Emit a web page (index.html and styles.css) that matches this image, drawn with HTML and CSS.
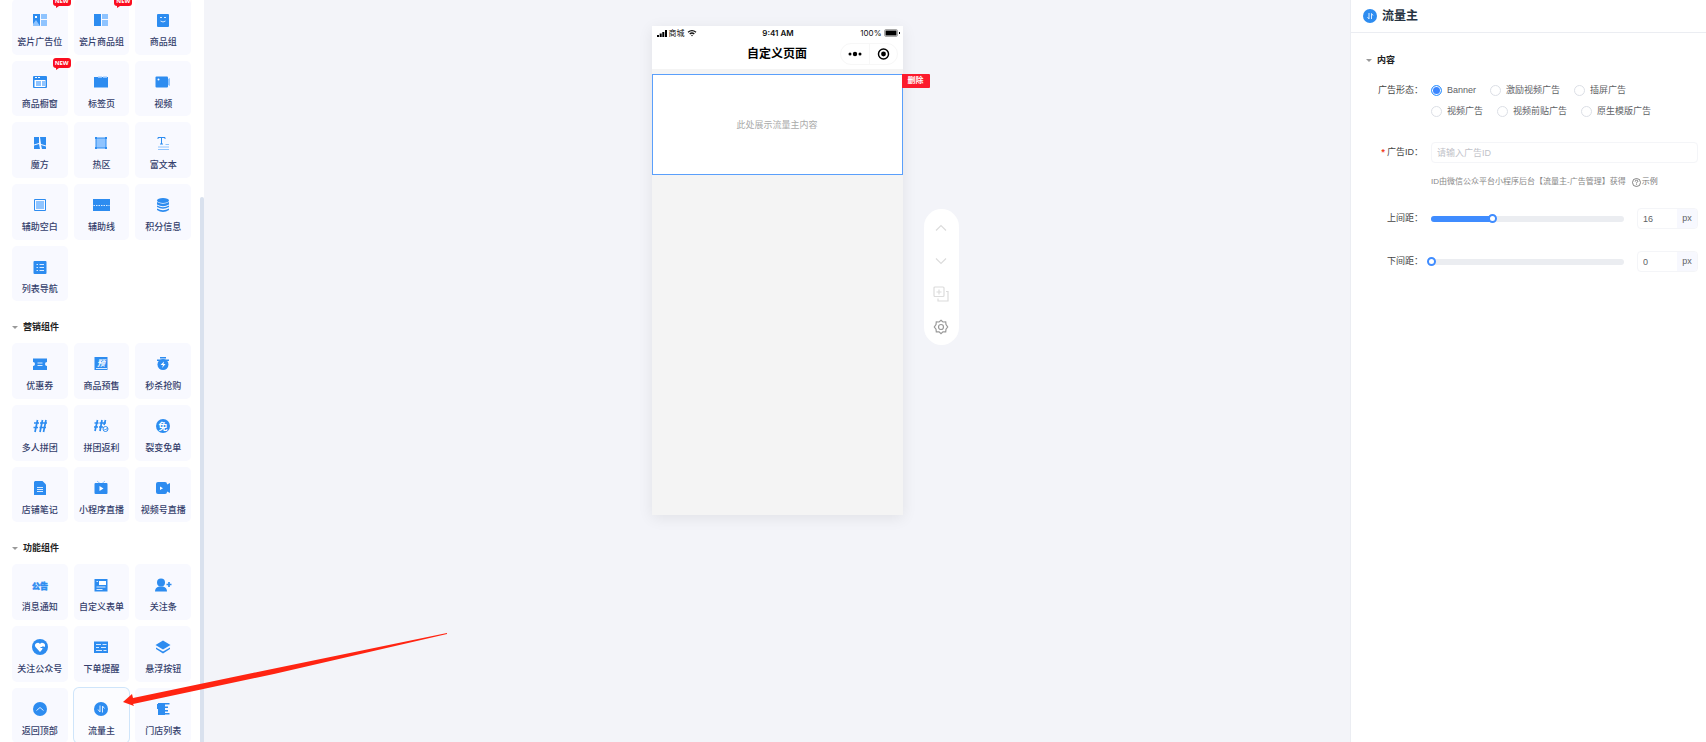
FILE: index.html
```html
<!DOCTYPE html>
<html lang="zh-CN">
	<head>
		<meta charset="utf-8" />
		<title>自定义页面</title>
		<link rel="stylesheet" href="styles.css">
	</head>
	<body>
		<div class="mainbox">
			<!-- 左侧组件列表 -->
			<aside class="sidebar">
				<div class="tiles first">
					<button class="tile"><span class="new">NEW</span>
						<svg viewBox="0 0 18 18"><path d="M2 3h7v12H2z"/><path class="l" d="M10 3h6v5h-6zM10 9h6v6h-6zM2 15v-2l3-4 4 6z"/><path class="w" d="M4 5h2v2H4z"/></svg>
						<span>瓷片广告位</span></button>
					<button class="tile"><span class="new">NEW</span>
						<svg viewBox="0 0 18 18"><path d="M2 3h7v12H2z"/><path class="l" d="M10 3h6v5h-6zM10 9h6v6h-6z"/></svg>
						<span>瓷片商品组</span></button>
					<button class="tile">
						<svg viewBox="0 0 18 18"><rect x="3" y="3" width="12" height="13" rx="1"/><path class="ws" d="M6 6.500h2M10 6.500h2M6.500 10q2.500 2 5 0"/></svg>
						<span>商品组</span></button>
					<button class="tile"><span class="new">NEW</span>
						<svg viewBox="0 0 18 18"><rect x="2" y="3" width="14" height="12" rx="1"/><path class="w" d="M3.500 7h11v7h-11zM4 4h2v1H4zM7 4h2v1H7z"/><path class="l" d="M5 8h5v5H5zM11 8h3v5h-3z"/></svg>
						<span>商品橱窗</span></button>
					<button class="tile">
						<svg viewBox="0 0 18 18"><path d="M2 4h14v10.500H2z"/><path class="l" d="M6 3.500h4V5H6zM11 3.500h4V5h-4z"/></svg>
						<span>标签页</span></button>
					<button class="tile">
						<svg viewBox="0 0 18 18"><rect x="1.500" y="3.500" width="12.500" height="11" rx="1"/><path class="l" d="M14 6l2-1v8l-2-1z"/><circle class="w" cx="4.500" cy="6.500" r="1"/></svg>
						<span>视频</span></button>
					<button class="tile">
						<svg viewBox="0 0 18 18"><path d="M3 3h5v6l-5 1.500zM3 11.500L8 10l1 5H3zM9 3h6v8.500L10 10zM10 11l5 1.500V15h-4z"/></svg>
						<span>魔方</span></button>
					<button class="tile">
						<svg viewBox="0 0 18 18"><rect class="l" x="4" y="4" width="10" height="10"/><rect class="s" x="4" y="4" width="10" height="10"/><path d="M3 3h2v2H3zM13 3h2v2h-2zM3 13h2v2H3zM13 13h2v2h-2z"/></svg>
						<span>热区</span></button>
					<button class="tile">
						<svg viewBox="0 0 18 18"><path class="s" d="M4 5V3.500h7V5M7.500 3.500V10M6 10h3"/><path class="ls" d="M11.500 10.500H15M4 13h11M4 15.500h11"/></svg>
						<span>富文本</span></button>
					<button class="tile">
						<svg viewBox="0 0 18 18"><path class="s" d="M3.500 3.500h11v11h-11z"/><path class="l" d="M5 5h8v8H5z"/></svg>
						<span>辅助空白</span></button>
					<button class="tile">
						<svg viewBox="0 0 18 18"><path d="M1 3h17v12H1z"/><path class="ws" stroke-dasharray="1.500 1" d="M1.500 9.500h16"/></svg>
						<span>辅助线</span></button>
					<button class="tile">
						<svg viewBox="0 0 18 18"><ellipse cx="9" cy="4.500" rx="6" ry="2.500"/><path d="M3 6q6 3.500 12 0v2.500q-6 3.500-12 0zM3 9.500q6 3.500 12 0V11q-6 3.500-12 0zM3 12.500q6 3.500 12 0V14q-6 4-12 0z"/></svg>
						<span>积分信息</span></button>
					<button class="tile">
						<svg viewBox="0 0 18 18"><rect x="2.500" y="3" width="13" height="13" rx="1"/><path class="ws" d="M5.500 6.500H7M8.500 6.500H13M5.500 9.500H7M8.500 9.500H13M5.500 12.500H7M8.500 12.500H13"/></svg>
						<span>列表导航</span></button>
				</div>

				<h3 class="group"><i class="caret"></i>营销组件</h3>
				<div class="tiles">
					<button class="tile">
						<svg viewBox="0 0 18 18"><path d="M2 3.500h14v3.500a2 2 0 0 0 0 4v4H2v-4a2 2 0 0 0 0-4z"/><path class="ws" d="M6.500 8h5M6.500 10.500h5"/></svg>
						<span>优惠券</span></button>
					<button class="tile">
						<svg viewBox="0 0 18 18"><path d="M2.500 2h13v13h-13z"/><path class="ws" d="M4 13.500h11"/><text class="w it" x="5" y="10.500" font-size="8">预</text></svg>
						<span>商品预售</span></button>
					<button class="tile">
						<svg viewBox="0 0 18 18"><path d="M6 2h6v1.500H6zM3 4.500h12V6H3z"/><circle cx="9" cy="9.500" r="5.500"/><path class="w" d="M10 6.500L6.500 10H9l-1 3 3.500-4H9.500z"/></svg>
						<span>秒杀抢购</span></button>
					<button class="tile">
						<svg viewBox="0 0 18 18"><path class="s2" d="M3 6h5M2.500 10.500h4.500M6.500 3L4 15M9 6h7M8.500 10.500H15M11.500 3L9 15M15 3l-2.500 12"/></svg>
						<span>多人拼团</span></button>
					<button class="tile">
						<svg viewBox="0 0 18 18"><path class="s2" d="M2.500 6h4M2 10h4M5.500 3L3 14M7.500 6H14M7 10h4M10 3L8 14M13.500 3L12 8"/><circle class="s" cx="13.500" cy="12" r="2.500"/><path class="s" d="M12.500 12l1 1 2-2"/></svg>
						<span>拼团返利</span></button>
					<button class="tile">
						<svg viewBox="0 0 18 18"><circle cx="9" cy="9" r="7"/><text class="w" x="4.500" y="12.500" font-size="9">免</text></svg>
						<span>裂变免单</span></button>
					<button class="tile">
						<svg viewBox="0 0 18 18"><path d="M4 2h7.500L15 5.500V16H3V3z"/><path class="ws" d="M6 8.500h6M6 10.500h6M6 12.500h6"/></svg>
						<span>店铺笔记</span></button>
					<button class="tile">
						<svg viewBox="0 0 18 18"><path class="ls" d="M5 2l3 2.500M13 2l-3 2.500"/><rect x="2.500" y="4" width="13" height="11" rx="1"/><path class="w" d="M7.500 7v5l4-2.500z"/></svg>
						<span>小程序直播</span></button>
					<button class="tile">
						<svg viewBox="0 0 18 18"><rect x="2" y="3" width="11" height="12" rx="2"/><path d="M12 6l4-2v10l-4-2z"/><path class="w" d="M6 7.500v3.500l3-1.750z"/></svg>
						<span>视频号直播</span></button>
				</div>

				<h3 class="group"><i class="caret"></i>功能组件</h3>
				<div class="tiles">
					<button class="tile">
						<svg viewBox="0 0 18 18"><text class="hv" x="1" y="12.500" font-size="8">公告</text></svg>
						<span>消息通知</span></button>
					<button class="tile">
						<svg viewBox="0 0 18 18"><path d="M2.500 3h13v12.500h-13z"/><path class="ws" d="M4.500 5.500H6M4.500 11h9M4.500 13.500h6"/><path class="w" d="M7 5h7v4H7z"/></svg>
						<span>自定义表单</span></button>
					<button class="tile">
						<svg viewBox="0 0 18 18"><circle cx="7" cy="6.500" r="4"/><path d="M1 15.500q0-4 4-5h4q4 1 4 5z"/><path class="s2" d="M12.500 8.500h5M15 6v5"/></svg>
						<span>关注条</span></button>
					<button class="tile">
						<svg viewBox="0 0 18 18"><circle cx="9" cy="9" r="8"/><path class="w" d="M9 14L4.500 9a2.500 2.500 0 0 1 4.500-3 2.500 2.500 0 0 1 4.500 3z"/><path class="s" d="M9.500 9.500h5M12 8v5"/></svg>
						<span>关注公众号</span></button>
					<button class="tile">
						<svg viewBox="0 0 18 18"><path d="M2 3.500h14V15H2z"/><path class="ws" d="M4 6.500h5M10.500 6.500h4M4 9.500h3M9 9.500h5M4 12.500h6M11.500 12.500h3"/></svg>
						<span>下单提醒</span></button>
					<button class="tile">
						<svg viewBox="0 0 18 18"><path d="M9 2.500l7.500 4.500L9 11.500 1.500 7zM2 9.500l7 4 7-4V11l-7 4.500L2 11z"/></svg>
						<span>悬浮按钮</span></button>
					<button class="tile">
						<svg viewBox="0 0 18 18"><circle cx="9" cy="9" r="7"/><path class="ws" d="M5.500 10.500L9 7.500l3.500 3"/></svg>
						<span>返回顶部</span></button>
					<button class="tile active">
						<svg viewBox="0 0 18 18"><circle cx="9" cy="9" r="7"/><path class="ws" d="M8 5.500V12L6 9.500M10.500 12.500V6l2 2.500"/></svg>
						<span>流量主</span></button>
					<button class="tile">
						<svg viewBox="0 0 18 18"><path d="M4 3h7v12H4zM3 4h8v5H3zM10 3h5.500v1.500H10zM10 6.500h4V8h-4zM10 10h4v1.500h-4zM10 13h5.500v1.500H10z"/></svg>
						<span>门店列表</span></button>
				</div>
				<div class="scrollbar"></div>
			</aside>

			<!-- 中间预览 -->
			<main class="canvas">
				<div class="phone">
					<div class="status">
						<span class="signal">
							<svg class="bars" viewBox="0 0 10 8"><path d="M0 6h2v2H0zM2.700 4.500h2V8h-2zM5.300 3h2v5h-2zM8 1h2v7H8z"/></svg>
							商城
							<svg class="wifi" viewBox="0 0 10 8"><path d="M1 3.200q4-3.200 8 0M2.700 5q2.300-2 4.600 0"/><circle cx="5" cy="6.500" r=".7"/></svg>
						</span>
						<b>9:41 AM</b>
						<span class="power">100%
							<svg class="battery" viewBox="0 0 16 8"><rect x=".5" y=".5" width="13" height="7" rx="1.500"/><path d="M1.500 1.500h11v5h-11zM15 3h1v2h-1z"/></svg>
						</span>
					</div>
					<div class="nav">
						<h1>自定义页面</h1>
						<div class="capsule">
							<svg viewBox="0 0 28 20"><circle cx="9" cy="10" r="1.500"/><circle cx="14" cy="10" r="2.200"/><circle cx="19" cy="10" r="1.500"/></svg>
							<svg viewBox="0 0 28 20"><circle class="ring" cx="14" cy="10" r="5.200"/><circle cx="14" cy="10" r="2.500"/></svg>
						</div>
					</div>
					<div class="block">
						此处展示流量主内容
						<button class="del">删除</button>
					</div>
					<div class="tools">
						<button aria-label="上移"><svg viewBox="0 0 16 16"><path d="M3 10.500l5-5 5 5"/></svg></button>
						<button aria-label="下移"><svg viewBox="0 0 16 16"><path d="M3 5.500l5 5 5-5"/></svg></button>
						<button aria-label="复制"><svg viewBox="0 0 16 16"><rect x="1" y="1" width="10" height="9.500" rx="1"/><path d="M6 3.500v5M3.500 6h5M13 5.500h2V15H5v-2.500"/></svg></button>
						<button class="set" aria-label="设置"><svg viewBox="0 0 16 16"><path d="M8 1.300l1.900 1.700 2.800-.200.300 2.800L14.700 8 13 10.200l-.300 2.700-2.800-.100L8 14.600l-1.900-1.800-2.800.100L3 10.200 1.300 8 3 5.600l.300-2.800 2.800.200z"/><circle cx="8" cy="8" r="2.500"/></svg></button>
					</div>
				</div>
			</main>

			<!-- 右侧设置 -->
			<aside class="panel">
				<h2 class="panel-title">
					<svg viewBox="0 0 14 14"><circle cx="7" cy="7" r="7"/><path class="ws" d="M6 4v6L4.500 8M8.500 10V4.500L10 6.500"/></svg>
					流量主
				</h2>
				<form class="form">
					<h3 class="group"><i class="caret"></i>内容</h3>
					<div class="row">
						<span class="name">广告形态：</span>
						<div class="radios">
							<label><input type="radio" name="type" checked>Banner</label>
							<label><input type="radio" name="type">激励视频广告</label>
							<label><input type="radio" name="type">插屏广告</label>
							<label><input type="radio" name="type">视频广告</label>
							<label><input type="radio" name="type">视频前贴广告</label>
							<label><input type="radio" name="type">原生模版广告</label>
						</div>
					</div>
					<div class="row">
						<label class="name" for="adid"><em>*</em> 广告ID：</label>
						<div class="field">
							<input class="text" id="adid" type="text" placeholder="请输入广告ID">
							<p class="help">ID由微信公众平台小程序后台【流量主-广告管理】获得
								<a href="#"><svg viewBox="0 0 9 9"><circle cx="4.500" cy="4.500" r="4"/><path d="M3.200 3.600q0-1.400 1.300-1.400t1.300 1.200q0 .7-1.300 1.300v.7M4.500 6.300v.8"/></svg>示例</a>
							</p>
						</div>
					</div>
					<div class="row">
						<label class="name" for="top">上间距：</label>
						<div class="range">
							<div class="slider">
								<div class="rail"><div class="fill" style="width:32%"></div></div>
								<input id="top" type="range" min="0" max="50" value="16">
							</div>
							<div class="num"><input type="text" value="16" aria-label="上间距数值"><span>px</span></div>
						</div>
					</div>
					<div class="row">
						<label class="name" for="bottom">下间距：</label>
						<div class="range">
							<div class="slider">
								<div class="rail"><div class="fill" style="width:0%"></div></div>
								<input id="bottom" type="range" min="0" max="50" value="0">
							</div>
							<div class="num"><input type="text" value="0" aria-label="下间距数值"><span>px</span></div>
						</div>
					</div>
				</form>
			</aside>
		</div>

		<!-- 指向流量主的箭头 -->
		<svg class="arrow" viewBox="0 0 326 74"><path d="M1 69L10 61 11 65 150 36 325 0v1L152 41 11 71 12 73z"/></svg>
	</body>
</html>
```

FILE: styles.css
```css
*{
	margin: 0;
	padding: 0;
	border: 0;
	box-sizing: border-box;
}
body{
	font-family: "Liberation Sans","Noto Sans CJK SC",sans-serif;
	font-size: 9px;
	color: #606266;
	background: #f3f4f9;
	overflow: hidden;
}
button,input{
	font-family: inherit;
	font-size: 9px;
	color: inherit;
	background: none;
	outline: none;
}
button{
	cursor: pointer;
}
.mainbox{
	display: flex;
	height: 100vh;
}

/* 左侧 */
.sidebar{
	width: 204px;
	flex: none;
	padding: 0 13px 0 12px;
	background: #fff;
	position: relative;
	overflow: hidden;
}
.tiles{
	display: grid;
	grid-template-columns: repeat(3,1fr);
	gap: 6px;
}
.first{
	margin-top: -1px;
}
.tile{
	aspect-ratio: 1;
	min-width: 0;
	display: flex;
	flex-direction: column;
	align-items: center;
	justify-content: flex-start;
	gap: 6px;
	padding-top: 12px;
	border-radius: 5px;
	background: #f8f9ff;
	color: #353f6c;
	font-weight: 500;
	line-height: 14px;
	white-space: nowrap;
	position: relative;
}
.tile svg{
	width: 18px;
	height: 18px;
	flex: none;
}
.tile svg,.panel-title svg{
	fill: #2d8cf0;
}
.tile .l{
	fill: #8fc4ff;
}
.tile .w{
	fill: #fff;
}
.s,.s2,.ls,.ws{
	fill: none;
	stroke: #2d8cf0;
	stroke-width: 1;
}
.s2{
	stroke-width: 1.7;
}
.ls{
	stroke: #8fc4ff;
}
.ws{
	stroke: #d8eaff;
}
.tile text{
	font-weight: bold;
}
.tile .it{
	font-style: italic;
}
.tile .hv{
	font-weight: 900;
	stroke: #2d8cf0;
	stroke-width: .5;
}
.active{
	background: #fbfcff;
	box-shadow: 0 0 0 1px #cfe5fa;
}
.new{
	position: absolute;
	top: -3px;
	right: -3px;
	width: 18px;
	height: 10px;
	border-radius: 3px;
	background: #fb0d20;
	color: #fff;
	font: bold 6px/10px "Open Sans",sans-serif;
	text-align: center;
}
.new::after{
	content: "";
	position: absolute;
	left: 3px;
	top: 10px;
	border-top: 2px solid #fb0d20;
	border-right: 3px solid transparent;
}
.group{
	display: flex;
	align-items: center;
	padding: 16px 0 6px;
	font-size: 9px;
	line-height: 20px;
	color: #222;
}
.caret{
	border: 3px solid transparent;
	border-top: 3px solid #999;
	border-bottom: 0;
	margin-right: 5px;
}
.scrollbar{
	position: absolute;
	right: 0;
	top: 197px;
	bottom: 0;
	width: 4px;
	border-radius: 2px 2px 0 0;
	background: #d9e1ee;
}

/* 中间 */
.canvas{
	flex: 1;
	padding-top: 26px;
}
.phone{
	width: 251px;
	min-height: 489px;
	margin: 0 auto;
	background: #f4f4f4;
	box-shadow: 0 3px 14px rgba(0,0,0,.08);
	position: relative;
}
.status{
	display: grid;
	grid-template-columns: 1fr auto 1fr;
	align-items: center;
	height: 13px;
	padding: 0 3px 0 5px;
	background: #fff;
	color: #111;
	font-family: Inter,"Noto Sans CJK SC",sans-serif;
	font-size: 8px;
}
.status b{
	font-weight: 600;
}
.signal,.power{
	display: flex;
	align-items: center;
	gap: 2px;
}
.power{
	justify-content: flex-end;
}
.bars,.wifi{
	width: 10px;
	height: 8px;
}
.wifi path{
	fill: none;
	stroke: #111;
	stroke-width: 1.3;
}
.battery{
	width: 16px;
	height: 8px;
}
.battery rect{
	fill: none;
	stroke: #aaa;
}
.nav{
	display: grid;
	grid-template-columns: 1fr auto 1fr;
	align-items: center;
	height: 30px;
	background: #fff;
}
.nav h1{
	grid-column: 2;
	font-size: 12px;
	line-height: 20px;
	color: #000;
}
.capsule{
	justify-self: end;
	display: flex;
	width: 58px;
	height: 22px;
	margin-right: 5px;
	border: 1px solid #f7f7f7;
	border-radius: 11px;
}
.capsule svg{
	width: 28px;
	height: 20px;
}
.capsule svg + svg{
	border-left: 1px solid #f7f7f7;
}
.ring{
	fill: none;
	stroke: #000;
	stroke-width: 1.5;
}
.block{
	display: flex;
	align-items: center;
	justify-content: center;
	height: 101px;
	margin-top: 5px;
	border: 1px solid #5a9ffb;
	background: #fff;
	color: #aaa;
	position: relative;
}
.del{
	position: absolute;
	left: 100%;
	top: -1px;
	width: 28px;
	height: 14px;
	border-radius: 0 1px 1px 0;
	background: #fc1b2d;
	color: #fff;
	font-size: 8px;
	font-weight: bold;
	line-height: 14px;
}
.tools{
	position: absolute;
	left: 272px;
	top: 183px;
	width: 35px;
	padding: 2px 0;
	border-radius: 18px;
	background: #fff;
}
.tools button{
	display: flex;
	align-items: center;
	justify-content: center;
	width: 100%;
	height: 33px;
}
.tools svg{
	width: 16px;
	height: 16px;
	fill: none;
	stroke: #dcdcdc;
	stroke-width: 1.2;
}
.tools .set svg{
	stroke: #999;
}

/* 右侧 */
.panel{
	width: 356px;
	flex: none;
	border-left: 1px solid #ebedf2;
	background: #fff;
}
.panel-title{
	display: flex;
	align-items: center;
	gap: 5px;
	height: 33px;
	padding-left: 12px;
	border-bottom: 1px solid #ebedf2;
	font-size: 12px;
	line-height: 16px;
	color: #26323f;
}
.panel-title svg{
	width: 14px;
	height: 14px;
}
.form{
	padding: 0 8px 0 15px;
}
.form .group{
	padding-bottom: 10px;
	padding-top: 17px;
}
.row{
	display: grid;
	grid-template-columns: 57px 1fr;
	gap: 8px;
	margin-bottom: 20px;
	line-height: 21px;
}
.name{
	text-align: right;
	white-space: nowrap;
	color: #444;
}
.name em{
	font-weight: bold;
	color: #f0401f;
}
.radios{
	display: flex;
	flex-wrap: wrap;
	column-gap: 14px;
	padding-right: 32px;
}
.radios label{
	display: flex;
	align-items: center;
	gap: 5px;
}
.radios input{
	appearance: none;
	width: 11px;
	height: 11px;
	border: 1px solid #dcdfe6;
	border-radius: 50%;
}
.radios input:checked{
	border-color: #409eff;
	background: #3b86ff;
	box-shadow: inset 0 0 0 1px #fff;
}
.text{
	display: block;
	width: 100%;
	height: 21px;
	padding: 0 5px;
	border: 1px solid #f4f5f8;
	border-radius: 4px;
}
.text::placeholder{
	color: #bfc2c9;
}
.help{
	display: flex;
	align-items: center;
	gap: 6px;
	margin-top: 13px;
	font-size: 8px;
	line-height: 12px;
	white-space: nowrap;
	color: #888;
}
.help a{
	display: flex;
	align-items: center;
	gap: 1px;
	color: #777;
	text-decoration: none;
}
.help svg{
	width: 9px;
	height: 9px;
	fill: none;
	stroke: #666;
	stroke-width: .8;
}
.range{
	display: flex;
	gap: 13px;
	padding-bottom: 2px;
}
.slider{
	flex: 1;
	display: grid;
	align-items: center;
}
.rail,.slider input{
	grid-area: 1/1;
}
.rail{
	height: 6px;
	border-radius: 3px;
	background: #ebedf1;
}
.fill{
	height: 6px;
	border-radius: 3px;
	background: #3f8cff;
}
.slider input{
	appearance: none;
	height: 10px;
	margin: 0 -4px;
}
.slider input::-webkit-slider-thumb{
	appearance: none;
	width: 9px;
	height: 9px;
	border: 2px solid #3f8cff;
	border-radius: 50%;
	background: #fff;
}
.num{
	display: flex;
	width: 61px;
	height: 21px;
	border: 1px solid #f4f5f8;
	border-radius: 4px;
	overflow: hidden;
}
.num input{
	width: 39px;
	padding-left: 5px;
}
.num span{
	flex: 1;
	line-height: 19px;
	text-align: center;
	background: #f7f8fe;
}

.arrow{
	position: absolute;
	left: 122px;
	top: 633px;
	width: 326px;
	height: 74px;
	fill: #ff2412;
	pointer-events: none;
}
```
